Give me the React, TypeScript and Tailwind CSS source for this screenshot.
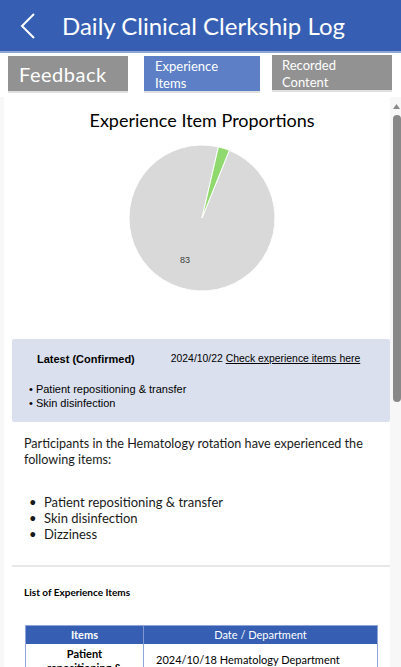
import React from "react";

function Pie() {
  const cx = 75, cy = 75, r = 73;
  const pt = (deg: number) => {
    const a = (deg * Math.PI) / 180;
    return [cx + r * Math.sin(a), cy - r * Math.cos(a)];
  };
  const [g1x, g1y] = pt(13);
  const [g2x, g2y] = pt(22);
  return (
    <svg width="150" height="150" viewBox="0 0 150 150">
      <path
        d={`M${cx} ${cy} L${g2x} ${g2y} A${r} ${r} 0 1 1 ${g1x} ${g1y} Z`}
        fill="#d9d9d9"
        stroke="#ffffff"
        strokeWidth="1"
        strokeLinejoin="round"
      />
      <path
        d={`M${cx} ${cy} L${g1x} ${g1y} A${r} ${r} 0 0 1 ${g2x} ${g2y} Z`}
        fill="#8fd96f"
        stroke="#ffffff"
        strokeWidth="1"
        strokeLinejoin="round"
      />
      <text x="58" y="120" textAnchor="middle" fontSize="9" fill="#404040" fontFamily="'Liberation Sans', Arial, sans-serif">83</text>
    </svg>
  );
}

export default function App() {
  return (
    <div className="w-[401px] h-[667px] overflow-hidden bg-[#f7f7f7] flex flex-col" style={{ fontFamily: "Lato, 'Noto Sans', sans-serif" }}>
      <div className="h-[51px] bg-[#365fb3] flex items-center shrink-0">
        <svg width="16" height="26" viewBox="0 0 16 26" className="ml-[20px] mr-[26px]">
          <path d="M14 1 L2 13 L14 25" fill="none" stroke="#ffffff" strokeWidth="2" />
        </svg>
        <span className="text-white text-[24px] leading-none">Daily Clinical Clerkship Log</span>
      </div>
      <div className="h-[2px] bg-[#8ea6d8] shrink-0" />
      <div className="bg-white h-[44px] flex items-start pt-[3px] shrink-0">
        <div className="ml-[8px] w-[120px] h-[37px] bg-[#929292] border-b-2 border-[#e0e0e0] flex items-center pl-[11px] text-white text-[20px] tracking-[0.5px]">Feedback</div>
        <div className="ml-[16px] w-[116px] h-[37px] bg-[#5c7fc6] border-b-2 border-[#e0e0e0] pl-[11px] pt-[2px] text-white text-[13px] leading-[17px]">Experience<br />Items</div>
        <div className="ml-[12px] -mt-[1px] w-[120px] h-[37px] bg-[#929292] border-b-2 border-[#e0e0e0] pl-[10px] pt-[2px] text-white text-[13px] leading-[17px]">Recorded<br />Content</div>
      </div>
      <div className="flex flex-1 min-h-0">
        <div className="ml-[4px] w-[386px] bg-white overflow-hidden">
          <div className="text-center text-[18px] leading-[24px] text-black pt-[11px] pl-[10px]">Experience Item Proportions</div>
          <div className="flex justify-center mt-[11px] pl-[10px]">
            <Pie />
          </div>
          <div className="ml-[8px] mt-[46px] h-[83px] bg-[#dbe0ee] rounded-[2px] text-[11px] text-black" style={{ fontFamily: "'Liberation Sans', Arial, sans-serif" }}>
            <div className="flex items-center pt-[13px] leading-[14px]">
              <span className="ml-[25px] font-bold">Latest (Confirmed)</span>
              <span className="ml-[36px] text-[10.4px]">2024/10/22 <span className="underline">Check experience items here</span></span>
            </div>
            <div className="pl-[17px] mt-[16px] leading-[14px] text-[11px]">
              <div>• Patient repositioning &amp; transfer</div>
              <div>• Skin disinfection</div>
            </div>
          </div>
          <div className="pl-[20px] pr-[6px] mt-[14px] text-[12.6px] leading-[16px] text-[#1a1a1a]">
            Participants in the Hematology rotation have experienced the following items:
          </div>
          <div className="mt-[26px] text-[13px] leading-[16px] text-[#1a1a1a]">
            {["Patient repositioning & transfer", "Skin disinfection", "Dizziness"].map((t) => (
              <div key={t} className="flex">
                <span className="w-[40px] pl-[25px]">•</span>
                <span>{t}</span>
              </div>
            ))}
          </div>
          <div className="ml-[8px] mt-[23px] h-[2px] bg-[#e8e8e8]" />
          <div className="ml-[20px] mt-[19px] text-[10px] font-bold leading-[12px] text-black">List of Experience Items</div>
          <div className="ml-[21px] mt-[27px] w-[353px] border border-[#8ea6d8]">
            <div className="flex h-[18px] bg-[#365fb3] text-white text-[11px] items-center">
              <div className="w-[117px] text-center font-bold">Items</div>
              <div className="flex-1 text-center border-l border-[#7f99d0] h-full flex items-center justify-center">Date / Department</div>
            </div>
            <div className="flex text-[11px] text-black">
              <div className="w-[117px] text-center font-bold leading-[14px] pt-[3px]">Patient<br />repositioning &amp;<br />transfer</div>
              <div className="flex-1 border-l border-[#8ea6d8] pl-[12px] pt-[8px]">2024/10/18 Hematology Department</div>
            </div>
          </div>
        </div>
        <div className="ml-[2px] w-[9px] bg-[#f7f7f7] flex flex-col items-center pt-[7px]">
          <svg width="7" height="5" viewBox="0 0 7 5"><path d="M0 5 L3.5 0 L7 5 Z" fill="#8a8a8a" /></svg>
          <div className="mt-[6px] w-[8px] h-[287px] rounded-full bg-[#888888]" />
        </div>
      </div>
    </div>
  );
}
